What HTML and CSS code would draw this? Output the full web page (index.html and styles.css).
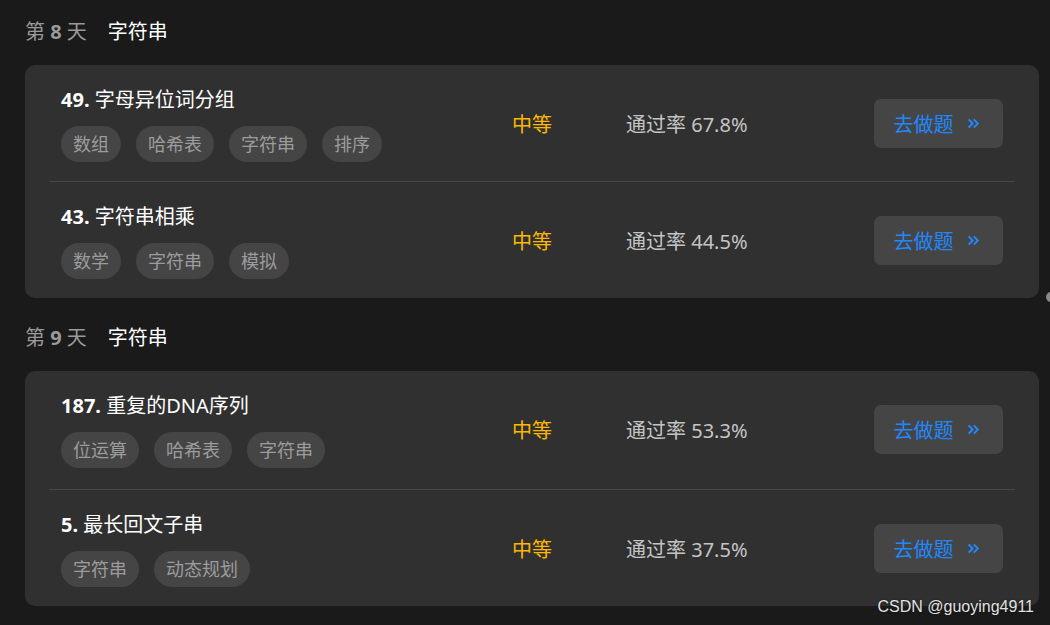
FILE: index.html
```html
<!DOCTYPE html>
<html lang="zh-CN">
<head>
    <meta charset="UTF-8">
    <meta name="viewport" content="width=device-width, initial-scale=1.0">
    <title>字符串 - 学习计划</title>
    <link rel="stylesheet" href="styles.css">
</head>
<body>
    <div class="page">
        <!-- Day 8 -->
        <h2 class="day-title"><span class="day-num">第 <b>8</b> 天</span><span class="day-topic">字符串</span></h2>
        <div class="card">
            <div class="problem">
                <div class="problem-info">
                    <div class="problem-name"><b>49.</b> 字母异位词分组</div>
                    <div class="tags">
                        <span class="tag">数组</span>
                        <span class="tag">哈希表</span>
                        <span class="tag">字符串</span>
                        <span class="tag">排序</span>
                    </div>
                </div>
                <div class="level">中等</div>
                <div class="rate">通过率 67.8%</div>
                <a class="go-btn" href="#">去做题 <svg width="13" height="13" viewBox="0 0 12 12"><path d="M1.5 2.2 L5.2 6 L1.5 9.8 M6.3 2.2 L10 6 L6.3 9.8" fill="none" stroke="currentColor" stroke-width="1.8"/></svg></a>
            </div>
            <div class="problem">
                <div class="problem-info">
                    <div class="problem-name"><b>43.</b> 字符串相乘</div>
                    <div class="tags">
                        <span class="tag">数学</span>
                        <span class="tag">字符串</span>
                        <span class="tag">模拟</span>
                    </div>
                </div>
                <div class="level">中等</div>
                <div class="rate">通过率 44.5%</div>
                <a class="go-btn" href="#">去做题 <svg width="13" height="13" viewBox="0 0 12 12"><path d="M1.5 2.2 L5.2 6 L1.5 9.8 M6.3 2.2 L10 6 L6.3 9.8" fill="none" stroke="currentColor" stroke-width="1.8"/></svg></a>
            </div>
        </div>

        <!-- Day 9 -->
        <h2 class="day-title"><span class="day-num">第 <b>9</b> 天</span><span class="day-topic">字符串</span></h2>
        <div class="card">
            <div class="problem problem-tall">
                <div class="problem-info">
                    <div class="problem-name"><b>187.</b> 重复的DNA序列</div>
                    <div class="tags">
                        <span class="tag">位运算</span>
                        <span class="tag">哈希表</span>
                        <span class="tag">字符串</span>
                    </div>
                </div>
                <div class="level">中等</div>
                <div class="rate">通过率 53.3%</div>
                <a class="go-btn" href="#">去做题 <svg width="13" height="13" viewBox="0 0 12 12"><path d="M1.5 2.2 L5.2 6 L1.5 9.8 M6.3 2.2 L10 6 L6.3 9.8" fill="none" stroke="currentColor" stroke-width="1.8"/></svg></a>
            </div>
            <div class="problem">
                <div class="problem-info">
                    <div class="problem-name"><b>5.</b> 最长回文子串</div>
                    <div class="tags">
                        <span class="tag">字符串</span>
                        <span class="tag">动态规划</span>
                    </div>
                </div>
                <div class="level">中等</div>
                <div class="rate">通过率 37.5%</div>
                <a class="go-btn" href="#">去做题 <svg width="13" height="13" viewBox="0 0 12 12"><path d="M1.5 2.2 L5.2 6 L1.5 9.8 M6.3 2.2 L10 6 L6.3 9.8" fill="none" stroke="currentColor" stroke-width="1.8"/></svg></a>
            </div>
        </div>
    </div>

    <span class="side-dot"></span>
    <div class="watermark">CSDN @guoying4911</div>
</body>
</html>
```

FILE: styles.css
```css
body {
    font-family: "Segoe UI", "Noto Sans", "Noto Sans CJK SC", sans-serif;
    background-color: #1a1a1a;
    margin: 0;
    height: 625px;
    overflow: hidden;
    position: relative;
}

.page {
    padding: 17px 11px 0 25px;
}

.day-title {
    margin: 0 0 18px;
    font-size: 20px;
    font-weight: normal;
    line-height: 30px;
    display: flex;
    gap: 21px;
}

.day-num {
    color: #9a9a9a;
}

.day-num b {
    font-weight: 700;
}

.day-topic {
    color: #ffffff;
}

.card {
    background-color: #303030;
    border-radius: 10px;
    padding: 0 24px;
    margin-bottom: 25px;
}

.problem {
    display: grid;
    grid-template-columns: 1fr 114px 248px 129px;
    align-items: center;
    padding: 20px 12px 19px;
    border-bottom: 1px solid #474747;
}

.problem-tall {
    padding-bottom: 21px;
}

.problem:last-child {
    border-bottom: none;
}

.problem-name {
    color: #ffffff;
    font-size: 20px;
    line-height: 30px;
}

.problem-name b {
    font-weight: 700;
}

.tags {
    display: flex;
    gap: 15px;
    margin-top: 11px;
}

.tag {
    background-color: #454545;
    color: #9c9c9c;
    font-size: 18px;
    height: 36px;
    line-height: 36px;
    padding: 0 12px;
    border-radius: 18px;
}

.level {
    color: #ffb800;
    font-size: 20px;
}

.rate {
    color: #c4c4c4;
    font-size: 20px;
}

.go-btn {
    display: flex;
    align-items: center;
    justify-content: center;
    gap: 13px;
    height: 49px;
    background-color: #454545;
    border-radius: 7px;
    color: #2188ff;
    font-size: 20px;
    text-decoration: none;
    padding-right: 4px;
}

.watermark {
    position: absolute;
    right: 16px;
    bottom: 9px;
    font-size: 16px;
    color: #e2e2e2;
    font-family: "Liberation Sans", Arial, sans-serif;
    text-shadow: 0 0 2px rgba(0, 0, 0, 0.6);
}

.side-dot {
    position: absolute;
    left: 1046px;
    top: 292px;
    width: 10px;
    height: 10px;
    border-radius: 50%;
    background-color: #8a8a8a;
}
```
